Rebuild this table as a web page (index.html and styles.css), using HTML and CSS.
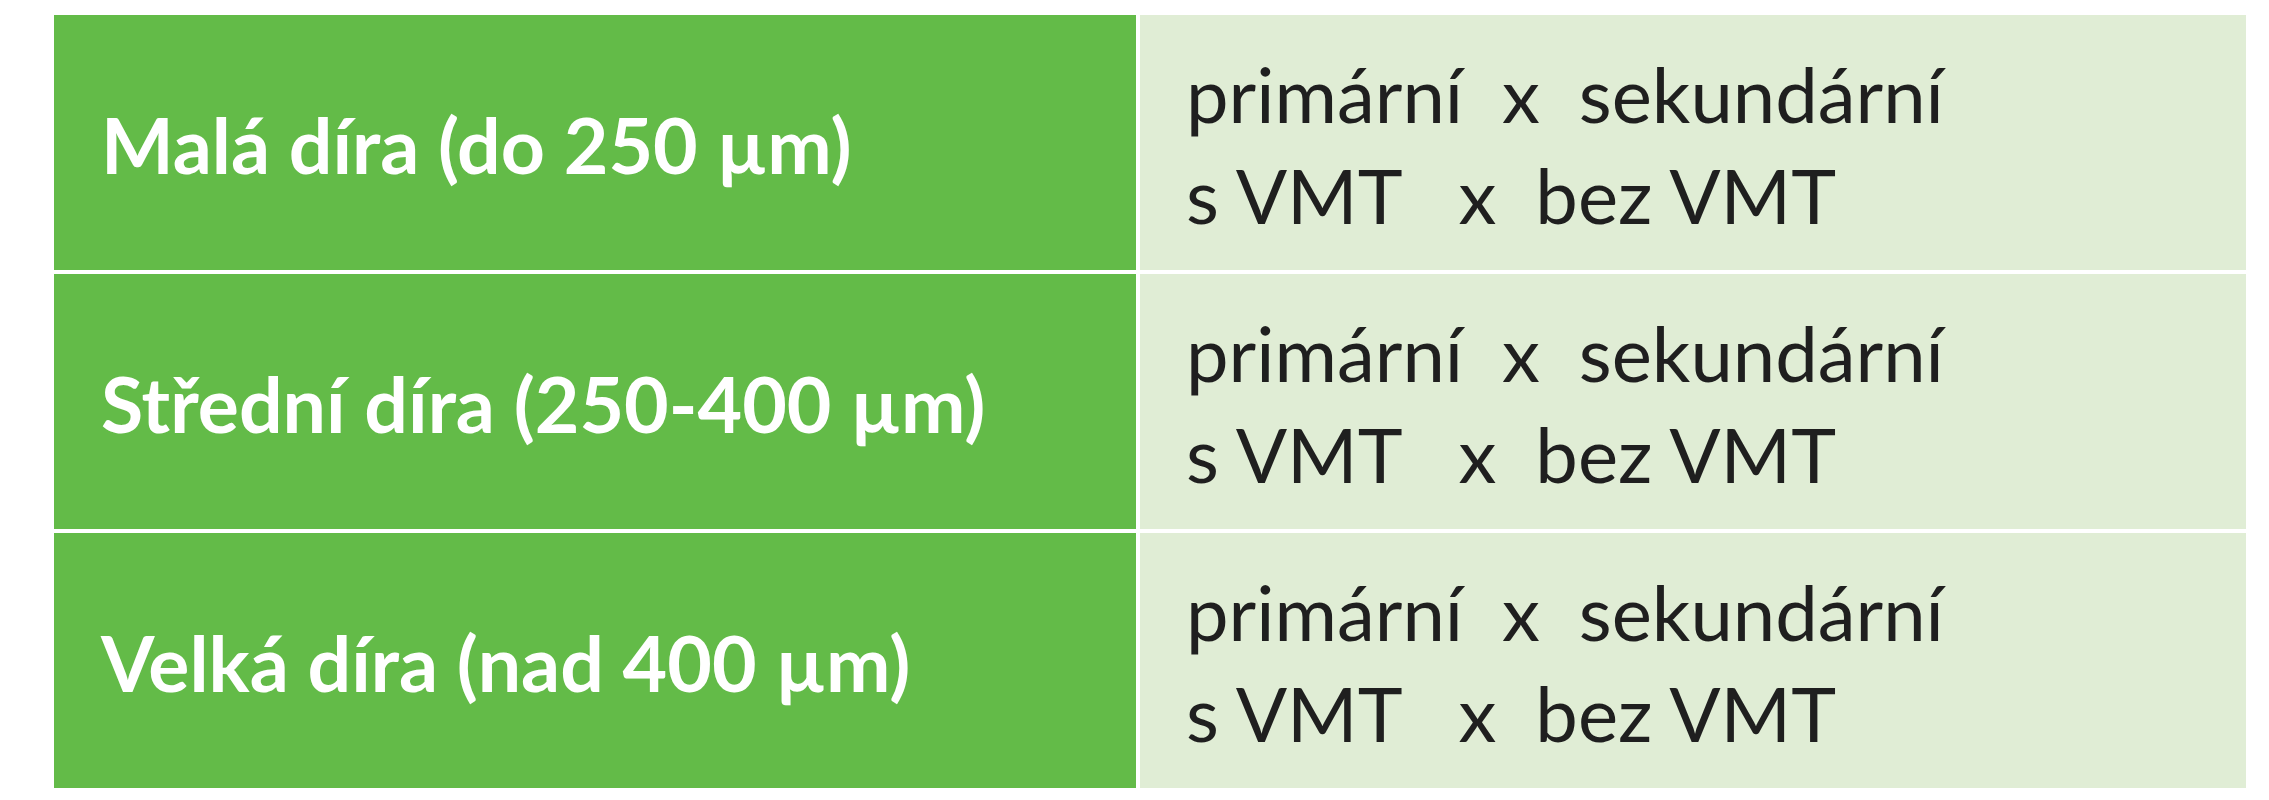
FILE: index.html
```html
<!DOCTYPE html>
<html lang="cs">
<head>
<meta charset="utf-8">
<title>Díry</title>
<link rel="stylesheet" href="styles.css">
</head>
<body>
<div class="table">
  <div class="cell head"><span>Malá díra (do 250 µm)</span></div>
  <div class="cell body"><div class="lines"><span>primární  x  sekundární</span><span>s VMT   x  bez VMT</span></div></div>
  <div class="cell head"><span>Střední díra (250-400 µm)</span></div>
  <div class="cell body"><div class="lines"><span>primární  x  sekundární</span><span>s VMT   x  bez VMT</span></div></div>
  <div class="cell head"><span>Velká díra (nad 400 µm)</span></div>
  <div class="cell body"><div class="lines"><span>primární  x  sekundární</span><span>s VMT   x  bez VMT</span></div></div>
</div>
</body>
</html>
```
FILE: styles.css
```css
html, body {
  margin: 0;
  padding: 0;
  background: #ffffff;
}
body {
  font-family: Lato, "Open Sans", "Noto Sans", sans-serif;
}
.table {
  display: grid;
  grid-template-columns: 1082px 1106px;
  grid-template-rows: 255px 255px 255px;
  column-gap: 4px;
  row-gap: 4px;
  margin: 15px 0 0 54px;
  width: 2192px;
}
.cell {
  display: flex;
  align-items: center;
  box-sizing: border-box;
}
.head {
  background: #63bb48;
  color: #ffffff;
  font-weight: 700;
  font-size: 77px;
  padding: 2px 0 0 47px;
}
.body {
  background: #e0edd5;
  color: #1f1f1f;
  font-size: 76px;
  padding: 2px 0 0 46px;
}
.lines {
  display: flex;
  flex-direction: column;
  line-height: 101px;
  white-space: pre;
}
```
